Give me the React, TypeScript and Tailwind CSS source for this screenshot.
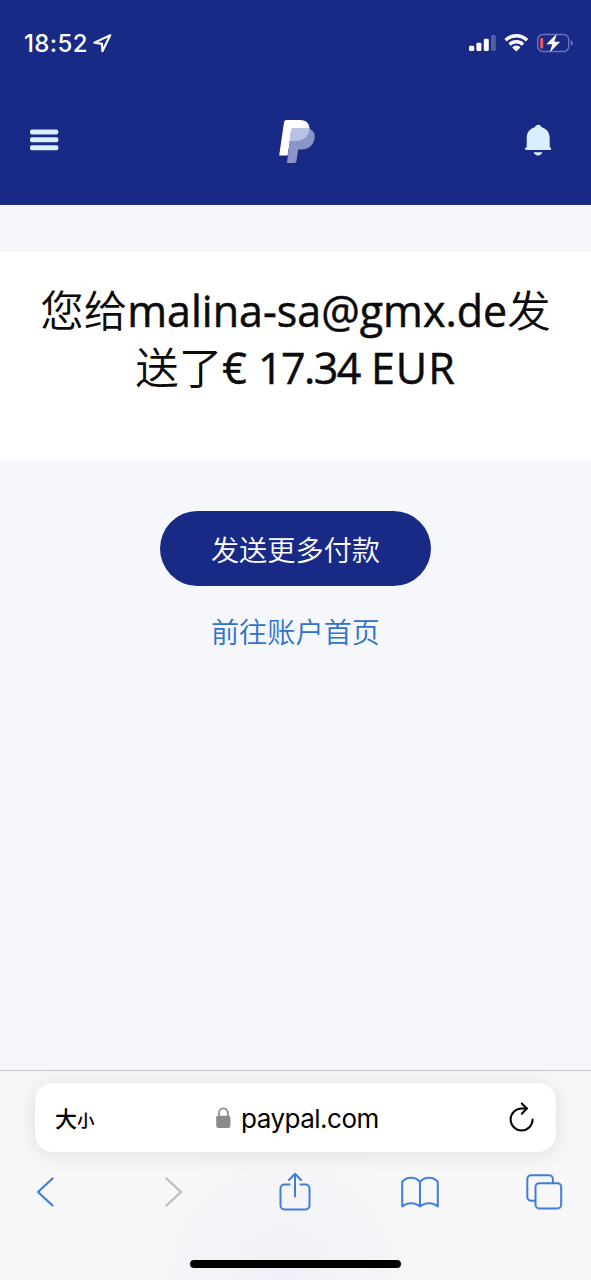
function StatusBar() {
  return (
    <div className="flex h-[86px] items-center justify-between pl-6 pr-[17px]">
      <div className="flex items-center gap-[5px]">
        <span className="mt-px w-[64px] whitespace-nowrap font-['Inter',sans-serif] text-[24px] font-medium leading-6 tracking-[0.4px] text-white">18:52</span>
        <svg width="20" height="20" viewBox="0 0 20 20" fill="none" stroke="white" strokeWidth="2.1" strokeLinejoin="round">
          <path d="M17.2 2.2 1.4 9.6l7.6 1.3.4 7.3z" />
        </svg>
      </div>
      <div className="flex items-center">
        <svg width="28" height="20" viewBox="0 0 28 20" fill="white">
          <rect x="1" y="12.8" width="5.2" height="5.3" rx="1.4" />
          <rect x="8.4" y="9.8" width="5" height="8.3" rx="1.4" />
          <rect x="15.8" y="5.7" width="5" height="12.4" rx="1.4" />
          <rect x="23" y="1.9" width="4.8" height="16.2" rx="1.4" opacity=".25" />
        </svg>
        <svg className="ml-[8px]" width="24" height="20" viewBox="0 0 24 20" fill="none" stroke="white" strokeWidth="3.4">
          <path d="M1.6 7.2a15.2 15.2 0 0 1 21.4 0" />
          <path d="M5.6 11.6a9.4 9.4 0 0 1 13.4 0" />
          <path d="M12.3 18.4 8.2 14.4a5.4 5.4 0 0 1 8.2 0z" fill="white" stroke="none" />
        </svg>
        <svg className="ml-[8px]" width="38" height="20" viewBox="0 0 38 20">
          <rect x="1.7" y="1.6" width="31" height="16.8" rx="5" fill="none" stroke="#6674bb" strokeWidth="1.5" />
          <path d="M34.8 7v6q2-.8 2-3t-2-3z" fill="#6674bb" />
          <rect x="4.2" y="5" width="3" height="10.4" rx="1" fill="#ee5a5c" />
          <path d="M21 .4 10.4 11.2h6l-3 8.5L24.200 8.800h-6z" fill="white" stroke="#192a86" strokeWidth="1" paintOrder="stroke" />
        </svg>
      </div>
    </div>
  )
}

function SiteHeader() {
  return (
    <header className="h-[205px] bg-[#192a86]">
      <StatusBar />
      <div className="grid h-[108px] grid-cols-3 items-center pl-[30px] pr-[39px]">
        <svg width="29" height="22" viewBox="0 0 29 22" fill="#d9effd">
          <rect x="0" y=".4" width="28.3" height="5" rx="1.8" />
          <rect x="0" y="8.3" width="28.3" height="5" rx="1.8" />
          <rect x="0" y="16.2" width="28.3" height="5" rx="1.8" />
        </svg>
        <svg className="ml-[74px] mt-[3px]" width="38" height="46" viewBox="278 119 38 46">
          <path d="M286.5 120h13.5c6.5 0 10.2 4.2 9.3 9.8-1.2 7.4-6.2 11.2-13 11.2h-6.4l-2.3 14.4H279.2l4.8-33.2q.4-2.2 2.5-2.2z" fill="white" />
          <path d="M292.8 128.5h15.5c4.6 1.2 7 5 6.4 9.6-1 7.2-6.2 11.4-13.2 11.4h-3.3l-1.7 11.6q-.3 2-2.3 2H287l4-32.700q.2-1.900 1.800-1.900z" fill="#8a94c8" />
          <path d="M292.800 128.500h16.600q.2.700 0 1.600c-1.200 7-6.200 10.900-13 10.900h-6.600l1.200-10.600q.2-1.900 1.800-1.900z" fill="#b7c3e4" />
        </svg>
        <svg className="ml-auto mr-[0.5px] mt-[-1px]" width="27" height="32" viewBox="0 0 27 32" fill="#d9effd">
          <path d="M13.300.8c1.700 0 2.800 1 3.200 2.500 5 1.300 8.200 5.300 8.200 10.700v9.200q1.500.3 1.500 1.600 0 1.300-1.500 1.300H1.500Q0 26.100 0 24.800q0-1.300 1.700-1.600V14c0-5.400 3.200-9.400 8.200-10.700.5-1.500 1.600-2.500 3.400-2.500z" />
          <path d="M8.500 28.300h9q-1.300 3.100-4.500 3.100t-4.500-3.100z" />
        </svg>
      </div>
    </header>
  )
}

function AddressBar() {
  return (
    <div className="mx-[35px] flex h-[69px] items-center rounded-[18px] bg-white pl-5 pr-[22px] text-black shadow-[0_2px_20px_rgba(0,0,0,0.1)]">
      <div className="flex w-[161px] items-baseline font-['Noto_Sans_CJK_SC',sans-serif] font-medium leading-none">
        <span className="text-[22px]">大</span>
        <span className="text-[17.5px]">小</span>
      </div>
      <svg width="15" height="22" viewBox="0 0 15 22">
        <path d="M3 10V5.8a4.4 4.4 0 0 1 8.8 0V10" fill="none" stroke="#8a8a8c" strokeWidth="1.7" />
        <rect x=".2" y="8.7" width="14.2" height="12.2" rx="1.8" fill="#8a8a8c" />
      </svg>
      <span className="ml-[10px] mt-[2px] font-['Inter',sans-serif] text-[26px] leading-8 tracking-[-0.5px]">paypal.com</span>
      <svg className="ml-auto mt-[-2px]" width="25" height="30" viewBox="0 0 25 30" fill="none" stroke="black" strokeWidth="2" strokeLinecap="round" strokeLinejoin="round">
        <path d="M23.6 17.500A11 11 0 1 1 12.600 6.500H17.800" />
        <path d="m12.800 1.500 5 5-5 5.300" />
      </svg>
    </div>
  )
}

function Toolbar() {
  return (
    <nav className="mt-[18px] flex h-11 items-center pl-[36px] text-[#427dd8]" aria-label="Safari">
      <svg width="18" height="30" viewBox="0 0 18 30" fill="none" stroke="currentColor" strokeWidth="2.2" strokeLinecap="round" strokeLinejoin="round">
        <path d="M16.5 1.5 2 15l14.5 13.5" />
      </svg>
      <svg className="ml-[111px]" width="18" height="30" viewBox="0 0 18 30" fill="none" stroke="#bdbdc0" strokeWidth="2.2" strokeLinecap="round" strokeLinejoin="round">
        <path d="m1.5 1.5 14.5 13.5L1.5 28.5" />
      </svg>
      <svg className="ml-[96px] mt-[-2px]" width="32" height="40" viewBox="0 0 32 40" fill="none" stroke="currentColor" strokeWidth="2" strokeLinecap="round" strokeLinejoin="round">
        <path d="M10.5 13.5H5.5a4 4 0 0 0-4 4v17a4 4 0 0 0 4 4h21a4 4 0 0 0 4-4v-17a4 4 0 0 0-4-4H21.5" />
        <path d="M16 25.5V3M10 9l6-6.300L22 9" />
      </svg>
      <svg className="ml-[89.5px]" width="38" height="32" viewBox="0 0 38 32" fill="none" stroke="currentColor" strokeWidth="2" strokeLinejoin="round">
        <path d="M19 6C15 .2 5 .2 1.2 6v24.5c5-4.5 13-4.5 17.800 0 5-4.500 13-4.500 17.800 0V6C33 .2 23 .2 19 6zv24.500" />
      </svg>
      <svg className="ml-[87px]" width="37" height="36" viewBox="0 0 37 36" fill="none" stroke="currentColor" strokeWidth="2">
        <path d="M9.5 26.700H5a3.700 3.700 0 0 1-3.700-3.700V5A3.700 3.700 0 0 1 5 1.300h18.200A3.700 3.700 0 0 1 26.900 5v4" />
        <rect x="9.500" y="9.200" width="25.700" height="25.300" rx="3.700" />
      </svg>
    </nav>
  )
}

export default function App() {
  return (
    <div className="flex h-[1280px] w-[591px] flex-col overflow-hidden bg-[#f5f7fb]">
      <SiteHeader />

      <section className="mt-[47px] h-[208px] bg-white pt-[30px]">
        <h1 className="text-center font-['Open_Sans','Noto_Sans_CJK_SC',sans-serif] text-[43.5px] font-[350] leading-[57px] text-[#0b0b0b]">
          <span className="block h-[57px] whitespace-nowrap">
            您给<span className="text-[43px] font-medium [-webkit-text-stroke:0.5px]">malina-sa@gmx.de</span>发
          </span>
          <span className="block h-[57px] whitespace-nowrap">
            送了
            <span className="text-[43px] font-medium [-webkit-text-stroke:0.5px]">
              € <span className="tracking-[-1.6px]">17.34</span> <span className="tracking-[1px]">EUR</span>
            </span>
          </span>
        </h1>
      </section>

      <main className="flex flex-1 flex-col items-center pt-[51px] font-['Noto_Sans_CJK_SC',sans-serif] text-[28.2px] font-[350]">
        <button className="h-[75px] w-[271px] rounded-full bg-[#192a86] pt-0.5 text-white">发送更多付款</button>
        <a className="mt-[24px] leading-[42px] text-[#2f72cd]">前往账户首页</a>
      </main>

      <footer className="flex h-[210px] flex-col border-t border-[#c8c8d2] bg-[#f7f7f8] bg-[radial-gradient(circle_at_48%_100%,#f0f1f8,#f7f7f8_150px)] pt-3">
        <AddressBar />
        <Toolbar />
        <div className="mx-auto mt-auto mb-[12.5px] h-2 w-[211px] rounded-full bg-black" />
      </footer>
    </div>
  )
}
